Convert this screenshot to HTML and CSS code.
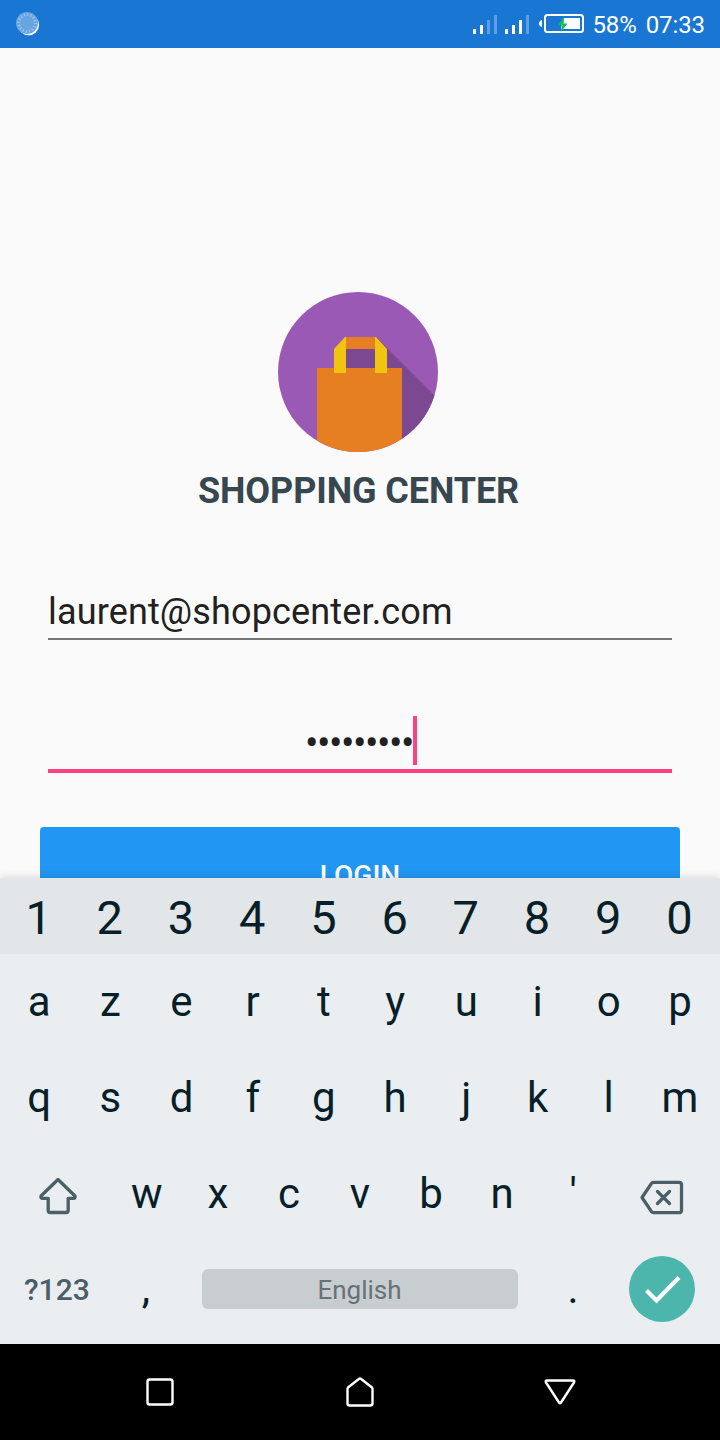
FILE: index.html
```html
<!DOCTYPE html>
<html lang="en">
<head>
<meta charset="utf-8">
<title>Shopping Center</title>
<link rel="stylesheet" href="styles.css">
</head>
<body>
<div class="phone">
  <header class="status">
    <svg class="sync" width="24" height="24" viewBox="0 0 24 24">
      <circle cx="12.600" cy="12.800" r="10.500" fill="#fff"/>
      <circle cx="11" cy="11" r="11" fill="#67a4e2"/>
      <circle cx="11" cy="11" r="8.400" fill="none" stroke="#a0c6ed" stroke-width="3" stroke-dasharray="1.100 2.200"/>
    </svg>
    <svg class="indicators" width="114" height="24" viewBox="0 0 114 24">
      <g fill="#fff">
        <rect x="1" y="17" width="3" height="5"/><rect x="8" y="13" width="3" height="9"/>
        <rect x="33" y="17" width="3" height="5"/><rect x="40" y="13" width="3" height="9"/><rect x="47" y="8" width="3" height="14"/>
      </g>
      <g fill="#5f9fe1">
        <rect x="15" y="8" width="3" height="14"/><rect x="22" y="3" width="3" height="19"/><rect x="54" y="3" width="3" height="19"/>
      </g>
      <path d="M70 8v7q-3-1-3-3.500t3-3.500z" fill="#fff"/>
      <rect x="73" y="3" width="38" height="17" rx="2.500" fill="none" stroke="#fff" stroke-width="2"/>
      <path d="M91 6h17v11H89z" fill="#fff"/>
      <path d="M92.500 4.500L86 13h4.500L88.500 20.500L95.500 11.500H91.500z" fill="#0bbf57"/>
    </svg>
    <span class="battery">58%</span>
    <span class="clock">07:33</span>
  </header>

  <main class="login">
    <svg class="logo" width="160" height="160" viewBox="0 0 160 160">
      <defs><clipPath id="disc"><circle cx="80" cy="80" r="80"/></clipPath></defs>
      <g clip-path="url(#disc)">
        <rect width="160" height="160" fill="#9b59b6"/>
        <path d="M98 45L170 117V160H124V76H67V56H98z" fill="#7d4892"/>
        <rect x="39" y="76" width="85" height="84" fill="#e67e22"/>
        <rect x="67" y="45" width="31" height="12" fill="#e67e22"/>
        <path d="M56 57L67 45H68V81H56zM97 45H98L109 57V81H97z" fill="#f1c40f"/>
      </g>
    </svg>
    <h1 class="title">SHOPPING CENTER</h1>
    <div class="field email">laurent@shopcenter.com</div>
    <div class="field password"><span class="dots">•••••••••</span><i class="caret"></i></div>
    <div class="button">LOGIN</div>
  </main>

  <section class="keyboard">
    <div class="row numbers"><b>1</b><b>2</b><b>3</b><b>4</b><b>5</b><b>6</b><b>7</b><b>8</b><b>9</b><b>0</b></div>
    <div class="row"><b>a</b><b>z</b><b>e</b><b>r</b><b>t</b><b>y</b><b>u</b><b>i</b><b>o</b><b>p</b></div>
    <div class="row"><b>q</b><b>s</b><b>d</b><b>f</b><b>g</b><b>h</b><b>j</b><b>k</b><b>l</b><b>m</b></div>
    <div class="row">
      <b class="wide shift"><svg width="42" height="42" viewBox="0 0 42 42"><path d="M21 4.500L38 21Q38.500 23.300 36.500 23.300H31.200V35.500Q31.200 37.500 29.200 37.500H13.200Q11.200 37.500 11.200 35.500V23.300H5.500Q3.500 23.300 4 21z" fill="none" stroke="#4b5f68" stroke-width="3.300" stroke-linejoin="round"/></svg></b>
      <b>w</b><b>x</b><b>c</b><b>v</b><b>b</b><b>n</b><b>'</b>
      <b class="wide delete"><svg width="46" height="42" viewBox="0 0 46 42"><g fill="none" stroke="#4b5f68" stroke-width="3.300" stroke-linejoin="round" stroke-linecap="round"><path d="M14.500 6.300H40Q42.500 6.300 42.500 8.800V34.200Q42.500 36.700 40 36.700H14.500Q13.500 36.700 12.500 35.700L3 21.500L12.500 7.300Q13.500 6.300 14.500 6.300z"/><path d="M18.500 15.500L30.500 27.500M30.500 15.500L18.500 27.500"/></g></svg></b>
    </div>
    <div class="row">
      <b class="wide symbols">?123</b><b class="mark">,</b>
      <b class="space"><span class="bar">English</span></b>
      <b class="mark">.</b>
      <b class="wide"><span class="enter"><svg width="66" height="66" viewBox="0 0 66 66"><path d="M17.500 34.500L27.500 44.500L50 21.500" fill="none" stroke="#fff" stroke-width="4.200"/></svg></span></b>
    </div>
  </section>

  <nav class="nav">
    <svg width="40" height="40" viewBox="0 0 40 40"><rect x="7.500" y="7.500" width="25" height="25" rx="2"/></svg>
    <svg width="40" height="40" viewBox="0 0 40 40"><path d="M18.800 7Q20 6 21.200 7L32 15.500Q32.500 16 32.500 17V31.500Q32.500 33.500 30.500 33.500H9.500Q7.500 33.500 7.500 31.500V17Q7.500 16 8 15.500z"/></svg>
    <svg width="40" height="40" viewBox="0 0 40 40"><path d="M7 8.500H33Q35 8.500 34 10.500L21 30.500Q20 32 19 30.500L6 10.500Q5 8.500 7 8.500z"/></svg>
  </nav>
</div>
</body>
</html>
```
FILE: styles.css
```css
* { box-sizing: border-box; }
body { margin: 0; font-family: Roboto, sans-serif; }
.phone {
  width: 720px;
  height: 1440px;
  display: flex;
  flex-direction: column;
  background: #fafafa;
  overflow: hidden;
}
.status {
  flex: none;
  height: 48px;
  padding: 0 16px;
  display: flex;
  align-items: center;
  background: #1976d2;
  color: #fff;
  font-size: 24px;
  line-height: 48px;
}
.indicators { margin-left: auto; margin-right: 6px; }
.battery, .clock { padding-top: 2px; letter-spacing: -.1px; }
.battery { margin-right: 9px; }
.clock { margin-right: -1px; }
.login {
  flex: none;
  height: 830px;
  padding: 244px 40px 0;
  display: flex;
  flex-direction: column;
  overflow: hidden;
}
.logo { flex: none; margin-left: 238px; }
.title {
  margin: 17px 3px 0 0;
  font-size: 36px;
  line-height: 44px;
  font-weight: 700;
  letter-spacing: -.1px;
  text-align: center;
  color: #37474f;
}
.field {
  flex: none;
  margin: 0 8px;
  font-size: 36px;
  color: #212121;
}
.email {
  margin-top: 75px;
  height: 52px;
  line-height: 48px;
  letter-spacing: .15px;
  border-bottom: 2px solid #757575;
}
.password {
  margin-top: 76px;
  height: 57px;
  padding-left: 2px;
  display: flex;
  justify-content: center;
  line-height: 48px;
  border-bottom: 4px solid #ff4081;
}
.dots {
  padding-top: 4px;
  font-size: 40px;
  letter-spacing: -1.5px;
}
.caret { width: 4px; height: 49px; background: #ff4081; }
.button {
  flex: none;
  margin-top: 54px;
  height: 96px;
  line-height: 98px;
  border-radius: 4px;
  background: #2196f3;
  color: #fff;
  font-size: 28px;
  font-weight: 500;
  text-align: center;
}
.keyboard {
  flex: none;
  height: 466px;
  background: #eaeef1;
  color: #061f29;
  box-shadow: 0 0 8px rgba(0, 0, 0, .16);
}
.row {
  height: 96px;
  padding: 0 4.5px 2px 3.5px;
  display: flex;
  align-items: center;
  font-size: 42px;
}
.row b {
  flex: 1 1 0;
  display: flex;
  justify-content: center;
  align-items: center;
  font-weight: 400;
}
.row .wide { flex-grow: 1.5; }
.row .space { flex-grow: 5; }
.row .shift { padding: 6px 0 0 1px; }
.row .delete { padding-top: 8px; }
.row .mark { padding-bottom: 2px; }
.row.numbers {
  height: 76px;
  padding: 4px 5px 2px 3px;
  background: #e2e6e9;
  font-size: 47px;
}
.row .symbols { font-size: 30px; font-weight: 500; color: #4b5f68; }
.bar {
  width: 316px;
  height: 40px;
  line-height: 42px;
  border-radius: 6px;
  background: #c8cdd0;
  color: #667178;
  font-size: 26px;
  text-align: center;
}
.enter {
  width: 66px;
  height: 66px;
  display: flex;
  border-radius: 50%;
  background: #4db6ac;
}
.nav {
  flex: none;
  height: 96px;
  display: flex;
  justify-content: center;
  align-items: center;
  gap: 160px;
  background: #000;
}
.nav svg { fill: none; stroke: #fff; stroke-width: 2.4; stroke-linejoin: round; }
```
